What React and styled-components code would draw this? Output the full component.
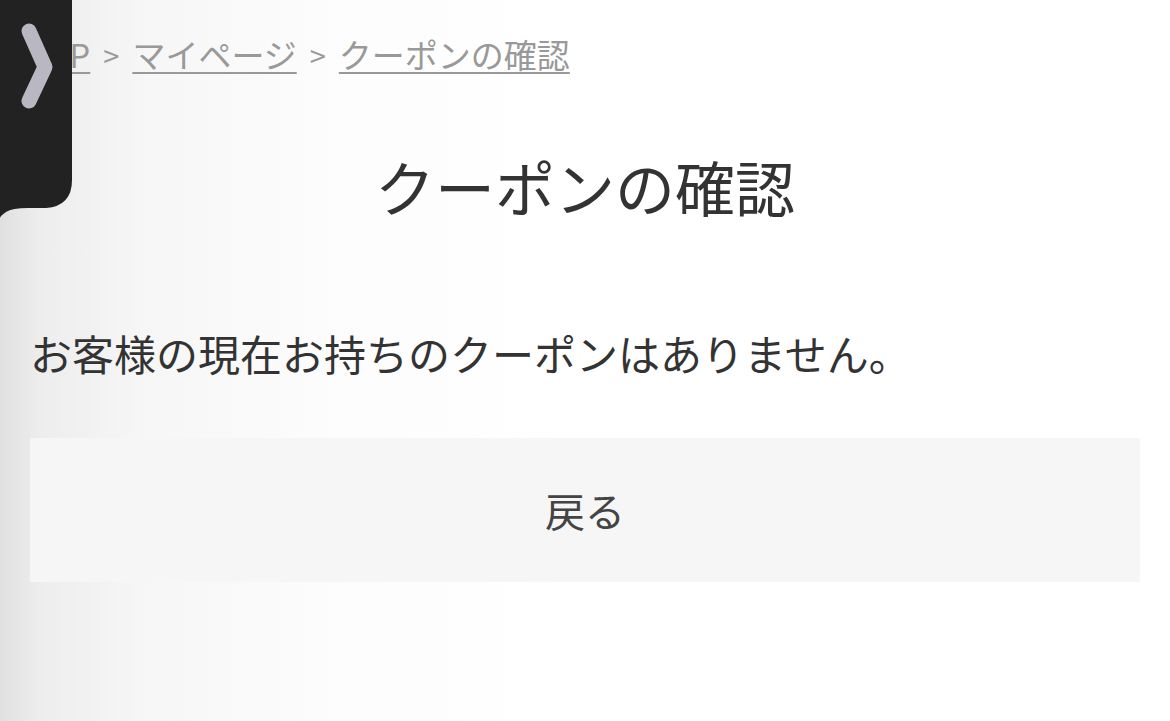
import styled, { createGlobalStyle } from 'styled-components';

const GlobalStyle = createGlobalStyle`
  html, body {
    margin: 0;
    padding: 0;
  }
  body {
    font-family: "Noto Sans CJK JP", "Noto Sans", sans-serif;
    color: #333;
    background: #fff;
  }
`;

const Page = styled.div`
  position: relative;
  min-height: 721px;
  overflow: hidden;
  background:
    linear-gradient(to right, #e0e0e0 0px, #ededed 40px, #f6f6f6 140px, #fcfcfc 320px, #fff 560px);
`;

const Content = styled.main`
  padding: 30px 30px 0 30px;
`;

const Breadcrumb = styled.nav`
  display: flex;
  align-items: center;
  margin-left: -4px;
  font-size: 33px;
  line-height: 48px;
  color: #999;
  white-space: nowrap;
`;

const Crumb = styled.a`
  color: #999;
  text-decoration: underline;
  text-decoration-thickness: 2px;
  text-underline-offset: 4px;
`;

const Sep = styled.span`
  margin: 0 13px;
  font-size: 29px;
`;

const Title = styled.h1`
  margin: 68px 0 0;
  text-align: center;
  font-size: 60px;
  font-weight: 400;
  line-height: 80px;
  color: #333;
`;

const Message = styled.p`
  margin: 99px 0 0 0;
  font-size: 42px;
  line-height: 56px;
  color: #333;
`;

const BackButton = styled.button`
  display: flex;
  align-items: center;
  justify-content: center;
  width: 100%;
  height: 144px;
  margin-top: 57px;
  border: 0;
  background: #f6f6f6;
  font-family: inherit;
  font-size: 40px;
  color: #444;
  cursor: pointer;
`;

const SideTab = styled.div`
  position: absolute;
  left: 0;
  top: 0;
  width: 72px;
  height: 218px;
`;

const Chevron = () => (
  <svg width="72" height="218" viewBox="0 0 72 218">
    <path
      d="M0 0 H72 V180 Q72 206 46 208 Q30 208 28 208 Q12 208 6 212 Q0 216 0 218 Z"
      fill="#222"
    />
    <path
      d="M29 31 L45 67 L29 101"
      fill="none"
      stroke="#b9b8c2"
      strokeWidth="15"
      strokeLinecap="round"
      strokeLinejoin="round"
    />
  </svg>
);

export default function App() {
  return (
    <>
      <GlobalStyle />
      <Page>
        <Content>
          <Breadcrumb>
            <Crumb>TOP</Crumb>
            <Sep>&gt;</Sep>
            <Crumb>マイページ</Crumb>
            <Sep>&gt;</Sep>
            <Crumb>クーポンの確認</Crumb>
          </Breadcrumb>
          <Title>クーポンの確認</Title>
          <Message>お客様の現在お持ちのクーポンはありません。</Message>
          <BackButton type="button">戻る</BackButton>
        </Content>
        <SideTab>
          <Chevron />
        </SideTab>
      </Page>
    </>
  );
}
